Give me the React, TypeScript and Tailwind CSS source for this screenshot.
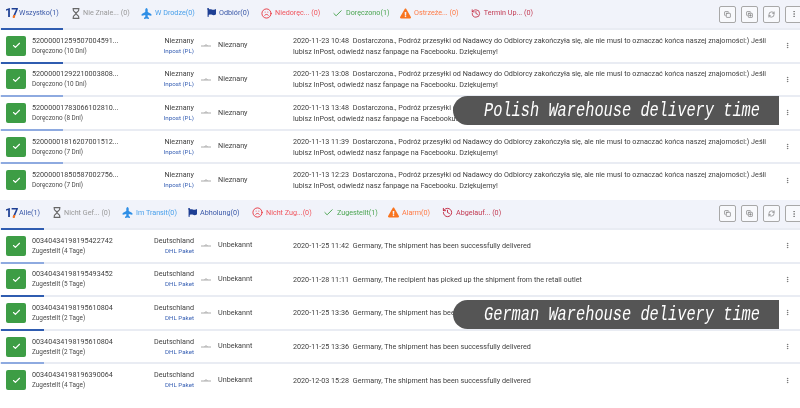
import React from 'react';
import { Check, Copy, CopyPlus, EllipsisVertical, RefreshCw, History, Frown } from 'lucide-react';
import { FaFlag, FaPlane, FaExclamationTriangle } from 'react-icons/fa';

type Tab = {
  label: string;
  tone: string;
  width: string;
  icon: React.ReactNode;
};

type Shipment = {
  number: string;
  status: string;
  origin: string;
  carrier: string;
  dest: string;
  time: string;
  text: string;
  bar: string;
};

const inpostText = 'Dostarczona., Podróż przesyłki od Nadawcy do Odbiorcy zakończyła się, ale nie musi to oznaczać końca naszej znajomości:) Jeśli lubisz InPost, odwiedź nasz fanpage na Facebooku. Dziękujemy!';

const DARK = 'bg-[#2f5cb0]';
const LIGHT = 'bg-[#8eaae0]';

const hourglass = (
  <svg width="8" height="11" viewBox="0 0 8 11" fill="none" stroke="#666" strokeWidth="1.1">
    <path d="M.6.6h6.8M.6 10.4h6.8M1.3.6v1.6c0 1.4 2.7 2.2 2.7 3.3S1.3 7.4 1.3 8.8v1.6M6.7.6v1.6C6.7 3.6 4 4.4 4 5.5s2.7 1.9 2.7 3.3v1.6" />
  </svg>
);

const plane = <FaPlane size={11} className="text-[#2f8fe6] -rotate-90" />;
const flag = <FaFlag size={9} className="text-[#1e3f94]" />;
const frown = <Frown size={11} className="text-[#e8333c]" />;
const tick = <Check size={11} className="text-[#43a047]" />;
const warning = <FaExclamationTriangle size={11} className="text-[#f9741f]" />;
const expired = <History size={11} className="text-[#c2233c]" />;

function Logo() {
  return (
    <span className="relative w-[11px] text-[12.5px] leading-none font-bold tracking-[-0.8px] text-[#1e3f94]">
      17
      <span className="absolute left-[8px] bottom-[1px] w-[2px] h-[3px] -skew-x-12 bg-[#f9741f]" />
    </span>
  );
}

const polishTabs: Tab[] = [
  { label: 'Wszystko(1)', tone: 'text-[#3a58a8]', width: 'w-[67px]', icon: <Logo /> },
  { label: 'Nie Znale... (0)', tone: 'text-[#999]', width: 'w-[69px]', icon: hourglass },
  { label: 'W Drodze(0)', tone: 'text-[#4aa0ea]', width: 'w-[66px]', icon: plane },
  { label: 'Odbiór(0)', tone: 'text-[#3a58a8]', width: 'w-[54px]', icon: flag },
  { label: 'Niedoręc... (0)', tone: 'text-[#f0545c]', width: 'w-[71px]', icon: frown },
  { label: 'Doręczono(1)', tone: 'text-[#4ba551]', width: 'w-[68px]', icon: tick },
  { label: 'Ostrzeże... (0)', tone: 'text-[#ff7a45]', width: 'w-[71px]', icon: warning },
  { label: 'Termin Up... (0)', tone: 'text-[#c23a52]', width: 'w-[62px]', icon: expired },
];

const germanTabs: Tab[] = [
  { label: 'Alle(1)', tone: 'text-[#3a58a8]', width: 'w-[48px]', icon: <Logo /> },
  { label: 'Nicht Gef... (0)', tone: 'text-[#999]', width: 'w-[69px]', icon: hourglass },
  { label: 'Im Transit(0)', tone: 'text-[#4aa0ea]', width: 'w-[66px]', icon: plane },
  { label: 'Abholung(0)', tone: 'text-[#3a58a8]', width: 'w-[64px]', icon: flag },
  { label: 'Nicht Zug...(0)', tone: 'text-[#f0545c]', width: 'w-[71px]', icon: frown },
  { label: 'Zugestellt(1)', tone: 'text-[#4ba551]', width: 'w-[65px]', icon: tick },
  { label: 'Alarm(0)', tone: 'text-[#ff7a45]', width: 'w-[54px]', icon: warning },
  { label: 'Abgelauf... (0)', tone: 'text-[#c23a52]', width: 'w-[62px]', icon: expired },
];

const polishRows: Shipment[] = [
  ['52000001259507004591...', 'Doręczono (10 Dni)', '2020-11-23 10:48', DARK],
  ['52000001292210003808...', 'Doręczono (10 Dni)', '2020-11-23 13:08', DARK],
  ['52000001783066102810...', 'Doręczono (8 Dni)', '2020-11-13 13:48', LIGHT],
  ['52000001816207001512...', 'Doręczono (7 Dni)', '2020-11-13 11:39', LIGHT],
  ['52000001850587002756...', 'Doręczono (7 Dni)', '2020-11-13 12:23', LIGHT],
].map(([number, status, time, bar]) => ({
  number,
  status,
  origin: 'Nieznany',
  carrier: 'Inpost (PL)',
  dest: 'Nieznany',
  time,
  text: inpostText,
  bar,
}));

const germanRows: Shipment[] = [
  ['00340434198195422742', 'Zugestellt (4 Tage)', '2020-11-25 11:42', 'Germany, The shipment has been successfully delivered', DARK],
  ['00340434198195493452', 'Zugestellt (5 Tage)', '2020-11-28 11:11', 'Germany, The recipient has picked up the shipment from the retail outlet', LIGHT],
  ['00340434198195610804', 'Zugestellt (2 Tage)', '2020-11-25 13:36', 'Germany, The shipment has been successfully delivered', DARK],
  ['00340434198195610804', 'Zugestellt (2 Tage)', '2020-11-25 13:36', 'Germany, The shipment has been successfully delivered', DARK],
  ['00340434198196390064', 'Zugestellt (4 Tage)', '2020-12-03 15:28', 'Germany, The shipment has been successfully delivered', LIGHT],
].map(([number, status, time, text, bar]) => ({
  number,
  status,
  origin: 'Deutschland',
  carrier: 'DHL Paket',
  dest: 'Unbekannt',
  time,
  text,
  bar,
}));

const ToolButton: React.FC<{ children: React.ReactNode }> = ({ children }) => (
  <div className="w-[17px] h-[17px] flex items-center justify-center border-[1.5px] border-[#a8a8a8] rounded-[2px] bg-[#f8f9fc] text-[#666]">
    {children}
  </div>
);

const Toolbar: React.FC<{ tabs: Tab[] }> = ({ tabs }) => (
  <div className="h-[28px] flex items-center justify-between bg-[#f1f3fa] pl-[5px]">
    <div className="flex items-center pb-[2px]">
      {tabs.map((tab) => (
        <div key={tab.label} className={`${tab.width} flex items-center gap-[3px] text-[7.2px] whitespace-nowrap ${tab.tone}`}>
          {tab.icon}
          <span>{tab.label}</span>
        </div>
      ))}
    </div>
    <div className="flex items-center gap-[5px] -mr-[2px]">
      <ToolButton><Copy size={7} /></ToolButton>
      <ToolButton><CopyPlus size={7} /></ToolButton>
      <ToolButton><RefreshCw size={7} /></ToolButton>
      <ToolButton><EllipsisVertical size={8} /></ToolButton>
    </div>
  </div>
);

const Row: React.FC<{ row: Shipment; barWidth: string }> = ({ row, barWidth }) => (
  <div className="h-[33.6px] flex flex-col">
    <div className="h-[2px] shrink-0 bg-[#e9ecf3] pl-[1px]">
      <div className={`h-full ${barWidth} ${row.bar}`} />
    </div>
    <div className="flex-1 flex items-center text-[7.2px] text-[#3f3f3f]">
      <div className="w-[20px] h-[20px] shrink-0 ml-[6px] flex items-center justify-center rounded-[2px] bg-[#3d9d45] text-white">
        <Check size={9} strokeWidth={3} />
      </div>
      <div className="w-[128px] shrink-0 ml-[6px] leading-[11px]">
        <div>{row.number}</div>
        <div className="text-[6.4px] text-[#4a4a4a]">{row.status}</div>
      </div>
      <div className="w-[34px] shrink-0 text-right leading-[11px]">
        <div className="whitespace-nowrap flex justify-end">{row.origin}</div>
        <div className="whitespace-nowrap flex justify-end text-[6.2px] text-[#3a62b5]">{row.carrier}</div>
      </div>
      <svg width="10" height="3" viewBox="0 0 10 3" className="shrink-0 ml-[7px]">
        <path d="M0 2h10M3.5 2 5 .5 6.5 2" stroke="#aaa" strokeWidth="1" fill="none" />
      </svg>
      <div className="w-[75px] shrink-0 ml-[7px]">{row.dest}</div>
      <div className="w-[478px] shrink-0 leading-[11px]">
        <span className="mr-[2px]">{row.time}</span> {row.text}
      </div>
      <EllipsisVertical size={7} className="shrink-0 ml-[13px] text-[#555]" />
    </div>
  </div>
);

const Banner: React.FC<{ text: string; top: string }> = ({ text, top }) => (
  <div className={`absolute left-[453px] ${top} w-[326px] h-[29px] flex items-center pl-[31px] rounded-l-full bg-[#555] text-white text-[21px] italic whitespace-nowrap font-['Liberation_Mono',monospace]`}>
    <span className="inline-block origin-left scale-x-[0.73]">{text}</span>
  </div>
);

export default function App() {
  return (
    <div className="relative w-[800px] h-[408px] overflow-hidden bg-white blur-[0.3px] font-['Roboto',sans-serif]">
      <Toolbar tabs={polishTabs} />
      {polishRows.map((row) => (
        <Row key={row.number} row={row} barWidth="w-[62px]" />
      ))}
      <div className="mt-[4px]">
        <Toolbar tabs={germanTabs} />
      </div>
      {germanRows.map((row, i) => (
        <Row key={row.number + i} row={row} barWidth="w-[43px]" />
      ))}
      <Banner text="Polish Warehouse delivery time" top="top-[96px]" />
      <Banner text="German Warehouse delivery time" top="top-[300px]" />
    </div>
  );
}
